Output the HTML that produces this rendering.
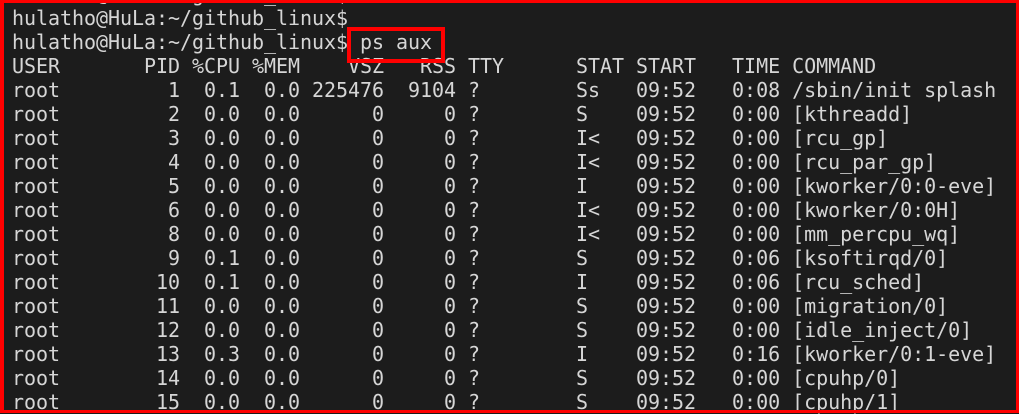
<!DOCTYPE html>
<html><head><meta charset="utf-8"><style>
html,body{margin:0;padding:0;}
body{width:1019px;height:413px;overflow:hidden;background:#1c1c1c;position:relative;}
pre{position:absolute;left:12px;top:-18px;margin:0;font-family:"DejaVu Sans Mono","Liberation Mono",monospace;font-size:20px;line-height:24px;color:#d6d6d6;letter-spacing:-0.04px;}
.frame{position:absolute;left:0;top:0;width:1019px;height:413px;box-sizing:border-box;border:3px solid #f00;border-left-width:4px;}
.box{position:absolute;left:347px;top:27px;width:98px;height:36px;box-sizing:border-box;border:4px solid #f00;}
</style></head><body>
<pre>hulatho@HuLa:~/github_linux$
hulatho@HuLa:~/github_linux$
hulatho@HuLa:~/github_linux$ ps aux
USER       PID %CPU %MEM    VSZ   RSS TTY      STAT START   TIME COMMAND
root         1  0.1  0.0 225476  9104 ?        Ss   09:52   0:08 /sbin/init splash
root         2  0.0  0.0      0     0 ?        S    09:52   0:00 [kthreadd]
root         3  0.0  0.0      0     0 ?        I&lt;   09:52   0:00 [rcu_gp]
root         4  0.0  0.0      0     0 ?        I&lt;   09:52   0:00 [rcu_par_gp]
root         5  0.0  0.0      0     0 ?        I    09:52   0:00 [kworker/0:0-eve]
root         6  0.0  0.0      0     0 ?        I&lt;   09:52   0:00 [kworker/0:0H]
root         8  0.0  0.0      0     0 ?        I&lt;   09:52   0:00 [mm_percpu_wq]
root         9  0.1  0.0      0     0 ?        S    09:52   0:06 [ksoftirqd/0]
root        10  0.1  0.0      0     0 ?        I    09:52   0:06 [rcu_sched]
root        11  0.0  0.0      0     0 ?        S    09:52   0:00 [migration/0]
root        12  0.0  0.0      0     0 ?        S    09:52   0:00 [idle_inject/0]
root        13  0.3  0.0      0     0 ?        I    09:52   0:16 [kworker/0:1-eve]
root        14  0.0  0.0      0     0 ?        S    09:52   0:00 [cpuhp/0]
root        15  0.0  0.0      0     0 ?        S    09:52   0:00 [cpuhp/1]</pre>
<div class="box"></div>
<div class="frame"></div>
</body></html>
